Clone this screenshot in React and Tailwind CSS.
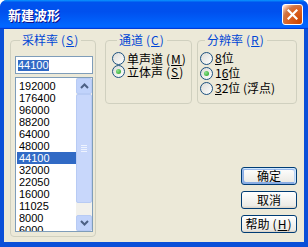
import React from 'react'

const rates = ['192000', '176400', '96000', '88200', '64000', '48000', '44100', '32000', '22050', '16000', '11025', '8000', '6000']

const cjk = "font-['SimSun','Noto_Sans_CJK_SC',sans-serif]"
const num = "font-['Liberation_Sans',Arial,sans-serif]"

function Radio({ checked }) {
  return (
    <span className="w-[13px] h-[13px] rounded-full border border-[#1c5180] bg-[linear-gradient(135deg,#dcdcd7,#ffffff)] flex items-center justify-center shrink-0">
      {checked && <span className="w-[5px] h-[5px] rounded-full bg-[radial-gradient(circle_at_35%_35%,#8ee28e,#21a121)]" />}
    </span>
  )
}

// mnemonic in brackets, e.g. (S) with S underlined
function Key({ k }) {
  return (
    <span className="ml-[3px] tracking-[1px]">
      (<u>{k}</u>)
    </span>
  )
}

function Group({ label, keyChar, className, children }) {
  return (
    <fieldset className={'border border-[#d0d0bf] rounded-[4px] ' + className}>
      <legend className={'ml-[5px] px-[2px] text-[12px] leading-[12px] text-[#0046d5] whitespace-nowrap ' + cjk}>
        {label}
        <Key k={keyChar} />
      </legend>
      {children}
    </fieldset>
  )
}

function Arrow({ up }) {
  return (
    <svg width="9" height="6" viewBox="0 0 9 6">
      <path d={up ? 'M1 5 L4.5 1.5 L8 5' : 'M1 1 L4.5 4.5 L8 1'} fill="none" stroke="#4d6185" strokeWidth="2" />
    </svg>
  )
}

function Button({ children, primary }) {
  return (
    <button
      className={
        'w-[56px] h-[18px] rounded-[3px] border border-[#003c74] bg-[linear-gradient(180deg,#ffffff,#ecebe5_86%,#d8d0c4)] text-[12px] leading-[12px] text-black flex items-center justify-center whitespace-nowrap ' +
        cjk +
        (primary ? ' shadow-[inset_-1px_1px_#cee7ff,inset_1px_2px_#98b8ea,inset_-2px_2px_#bcd4f6,inset_1px_-1px_#89ade4,inset_2px_-2px_#89ade4]' : '')
      }
    >
      {children}
    </button>
  )
}

function Option({ checked, children, h }) {
  return (
    <div className={'flex items-center gap-[2px] text-[12px] leading-[12px] whitespace-nowrap ' + h + ' ' + cjk}>
      <Radio checked={checked} />
      <span>{children}</span>
    </div>
  )
}

export default function App() {
  return (
    <div className="w-[308px] h-[247px] flex flex-col bg-[#0a4fd8] rounded-t-[7px] overflow-hidden">
      <div className="h-[29px] shrink-0 flex items-center justify-between pl-[8px] pr-[5px] bg-[linear-gradient(180deg,#0997ff,#0053ee_8%,#0050ee_40%,#0066ff_88%,#0066ff_93%,#005bff_95%,#003dd7_96%,#003dd7)]">
        <span className={'text-white font-bold text-[13px] leading-[13px] [text-shadow:1px_1px_#0f1089] ' + cjk}>新建波形</span>
        <div className="w-[21px] h-[21px] rounded-[3px] border border-white bg-[radial-gradient(circle_at_90%_90%,#cc4600_0%,#dc6527_55%,#cd7546_70%,#ffccb2_90%,#fff_100%)] flex items-center justify-center">
          <svg width="11" height="11" viewBox="0 0 11 11">
            <path d="M1.5 1.5 L9.5 9.5 M9.5 1.5 L1.5 9.5" stroke="#fff" strokeWidth="2.2" strokeLinecap="square" />
          </svg>
        </div>
      </div>

      <div className="flex-1 mx-[4px] mb-[5px] bg-[#ece9d8] flex pt-[5px] pl-[6px] pr-[7px] text-black">
        <Group label="采样率" keyChar="S" className="w-[87px] h-[203px] pl-[4px] pr-[2px] pt-[10px]">
          <div className="h-[18px] border border-[#7f9db9] bg-white flex items-center pl-[2px]">
            <span className={'bg-[#316ac5] text-white text-[11px] leading-[11px] ' + num}>44100</span>
          </div>
          <div className="mt-[3px] h-[155px] border border-[#7f9db9] bg-white flex">
            <div className="flex-1 pt-[2px] pl-[1px] overflow-hidden">
              {rates.map((r) => (
                <div
                  key={r}
                  className={
                    'h-[12px] pl-[2px] text-[11px] leading-[12px] ' +
                    num +
                    (r === '44100' ? ' bg-[#316ac5] text-white' : '')
                  }
                >
                  {r}
                </div>
              ))}
            </div>
            <div className="w-[16px] flex flex-col bg-[#f2f1ec]">
              <div className="h-[16px] rounded-[2px] border border-[#b8cbf4] bg-[#c1d3fb] flex items-center justify-center">
                <Arrow up />
              </div>
              <div className="h-[109px] rounded-[2px] border border-[#b8cbf4] bg-[#c8d7fb] flex flex-col items-center justify-center gap-[1px]">
                <span className="w-[6px] h-[1px] bg-[#eef3fe]" />
                <span className="w-[6px] h-[1px] bg-[#eef3fe]" />
                <span className="w-[6px] h-[1px] bg-[#eef3fe]" />
                <span className="w-[6px] h-[1px] bg-[#eef3fe]" />
              </div>
              <div className="flex-1" />
              <div className="h-[16px] rounded-[2px] border border-[#b8cbf4] bg-[#c1d3fb] flex items-center justify-center">
                <Arrow />
              </div>
            </div>
          </div>
        </Group>

        <div className="ml-[9px] flex-1 flex flex-col justify-between pb-[9px]">
          <div className="flex gap-[5px]">
            <Group label="通道" keyChar="C" className="w-[87px] h-[70px] pl-[6px] pt-[6px]">
              <Option h="h-[13px]">单声道<Key k="M" /></Option>
              <Option h="h-[13px]" checked>立体声<Key k="S" /></Option>
            </Group>
            <Group label="分辨率" keyChar="R" className="w-[100px] h-[70px] pl-[2px] pt-[5px]">
              <Option h="h-[14px] mb-[1px]"><u>8</u>位</Option>
              <Option h="h-[14px] mb-[1px]" checked>1<u>6</u>位</Option>
              <Option h="h-[14px]"><u>3</u>2位 (浮点)</Option>
            </Group>
          </div>
          <div className="flex flex-col items-end gap-[6px]">
            <Button primary>确定</Button>
            <Button>取消</Button>
            <Button>
              帮助<Key k="H" />
            </Button>
          </div>
        </div>
      </div>
    </div>
  )
}
